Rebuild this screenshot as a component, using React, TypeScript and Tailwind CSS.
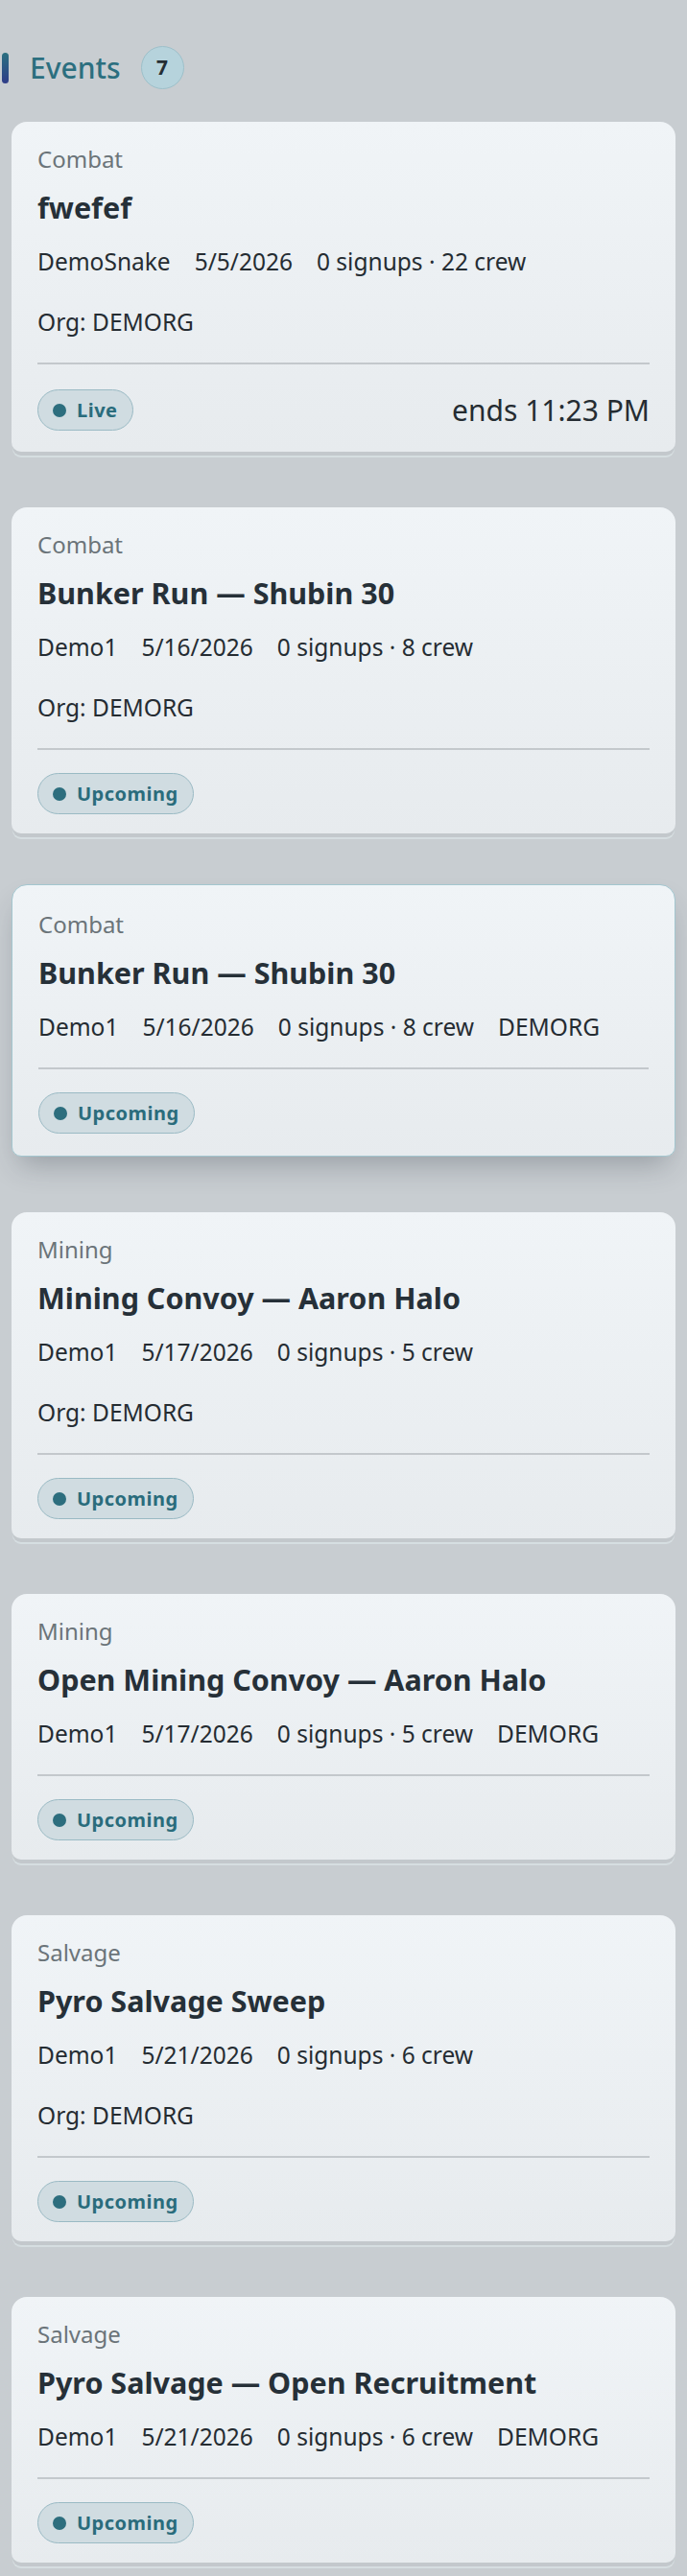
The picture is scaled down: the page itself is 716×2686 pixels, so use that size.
import React from 'react';

interface EventItem {
    category: string;
    title: string;
    host: string;
    date: string;
    counts: string;
    org: string;
    orgOwnLine: boolean;
    status: 'Live' | 'Upcoming';
    ends?: string;
    active?: boolean;
}

const events: EventItem[] = [
    { category: 'Combat', title: 'fwefef', host: 'DemoSnake', date: '5/5/2026', counts: '0 signups · 22 crew', org: 'DEMORG', orgOwnLine: true, status: 'Live', ends: 'ends 11:23 PM' },
    { category: 'Combat', title: 'Bunker Run — Shubin 30', host: 'Demo1', date: '5/16/2026', counts: '0 signups · 8 crew', org: 'DEMORG', orgOwnLine: true, status: 'Upcoming' },
    { category: 'Combat', title: 'Bunker Run — Shubin 30', host: 'Demo1', date: '5/16/2026', counts: '0 signups · 8 crew', org: 'DEMORG', orgOwnLine: false, status: 'Upcoming', active: true },
    { category: 'Mining', title: 'Mining Convoy — Aaron Halo', host: 'Demo1', date: '5/17/2026', counts: '0 signups · 5 crew', org: 'DEMORG', orgOwnLine: true, status: 'Upcoming' },
    { category: 'Mining', title: 'Open Mining Convoy — Aaron Halo', host: 'Demo1', date: '5/17/2026', counts: '0 signups · 5 crew', org: 'DEMORG', orgOwnLine: false, status: 'Upcoming' },
    { category: 'Salvage', title: 'Pyro Salvage Sweep', host: 'Demo1', date: '5/21/2026', counts: '0 signups · 6 crew', org: 'DEMORG', orgOwnLine: true, status: 'Upcoming' },
    { category: 'Salvage', title: 'Pyro Salvage — Open Recruitment', host: 'Demo1', date: '5/21/2026', counts: '0 signups · 6 crew', org: 'DEMORG', orgOwnLine: false, status: 'Upcoming' },
];

const StatusPill: React.FC<{ label: string }> = ({ label }) => (
    <span className="inline-flex h-[43px] items-center gap-[11px] rounded-full border-[1.5px] border-[#9abac4] bg-[#d0dce1] px-[15px]">
        <span className="h-[14px] w-[14px] rounded-full bg-[#2d6e7e]" />
        <span className="text-[20px] font-bold leading-none tracking-[0.5px] text-[#2a6c7c]">{label}</span>
    </span>
);

const EventCard: React.FC<{ ev: EventItem }> = ({ ev }) => {
    // the selected card sits slightly raised with a teal edge
    const frame = ev.active
        ? '-mt-[5px] pt-[23px] pb-[23px] border-[1.5px] border-[#a3c6cf] shadow-[0_16px_30px_-8px_rgba(40,50,60,0.3)]'
        : 'pt-[21px] pb-[20px] shadow-[0_5px_0_-1px_#c3c8cc,0_7px_0_-1px_#d6dee1]';

    return (
        <div className={`rounded-t-[16px] rounded-b-[10px] bg-gradient-to-b from-[#f0f4f7] to-[#e7ebee] px-[27px] ${frame}`}>
            <div className="text-[24px] leading-[36px] text-[#6b7479]">{ev.category}</div>
            <div className="mt-[13px] text-[30.5px] font-bold leading-[39px] text-[#263038]">{ev.title}</div>

            {/* meta row wraps; org drops to its own line when prefixed */}
            <div className="mt-[19px] flex flex-wrap gap-x-[25px] gap-y-[27px] text-[24.5px] leading-[36px] text-[#252c32]">
                <span>{ev.host}</span>
                <span>{ev.date}</span>
                <span>{ev.counts}</span>
                {ev.orgOwnLine ? (
                    <span className="basis-full">Org: {ev.org}</span>
                ) : (
                    <span>{ev.org}</span>
                )}
            </div>

            <div className="mt-[24px] flex items-center justify-between border-t-2 border-[#c3c8cc] pt-[24px]">
                <StatusPill label={ev.status} />
                {ev.ends && (
                    <span className="text-[30px] leading-[47px] text-[#252c32]">{ev.ends}</span>
                )}
            </div>
        </div>
    );
};

export default function App() {
    return (
        <div className="min-h-screen bg-[#c8cdd1] px-[12px] pt-[48px] pb-[18px] font-['Noto_Sans',sans-serif]">
            <div className="-ml-[10px] flex items-center">
                <span className="h-[32px] w-[7px] rounded-full bg-gradient-to-b from-[#2a7080] to-[#2f3c88]" />
                <h2 className="ml-[22px] text-[30px] font-medium leading-none text-[#2c6f7f]">Events</h2>
                <span className="ml-[21px] flex h-[45px] w-[45px] items-center justify-center rounded-full border-[1.5px] border-[#9dc0ca] bg-[#b6d3dc] text-[21px] font-bold text-[#252e34]">
                    7
                </span>
            </div>

            <div className="mt-[34px] flex flex-col gap-[58px]">
                {events.map((ev, i) => (
                    <EventCard key={i} ev={ev} />
                ))}
            </div>
        </div>
    );
}
